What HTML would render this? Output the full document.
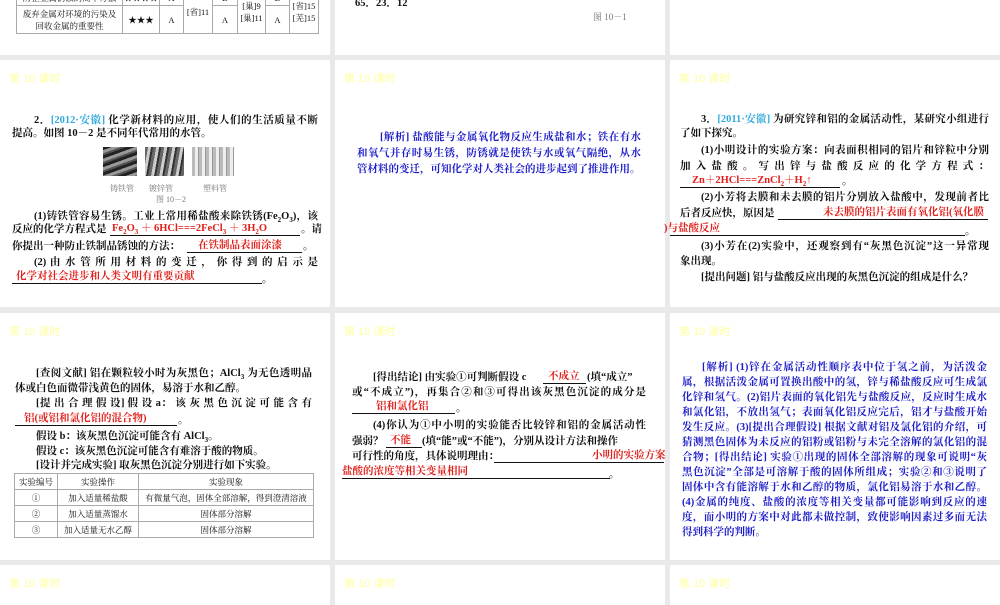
<!DOCTYPE html>
<html><head><meta charset="utf-8"><style>
*{margin:0;padding:0;box-sizing:border-box}
body{width:1000px;height:600px;background:#e9e9e9;position:relative;overflow:hidden}
.p{position:absolute;background:#fff}
.l{position:absolute;white-space:nowrap;font:bold 10.5px/14px "Liberation Serif","Noto Serif CJK SC",serif;color:#111}
.j{text-align:justify;text-align-last:justify}
.h{position:absolute;font:11px/12px "Liberation Sans","Noto Sans CJK SC",sans-serif;color:#ffffa0}
.r{color:#e0201c}
.b{color:#1c1cc8}
.c{color:#33aadd}
.ln{position:absolute;height:1px;background:#111}
table{position:absolute;border-collapse:collapse;font:8.5px "Liberation Serif","Noto Serif CJK SC",serif;color:#111;table-layout:fixed}
td{border:1px solid #aaa;text-align:center;padding:0;white-space:nowrap;overflow:hidden;line-height:12px}
.img{position:absolute;background:repeating-linear-gradient(160deg,#222 0 3px,#999 3px 6px,#555 6px 8px)}
.sm{position:absolute;font:8px "Liberation Serif","Noto Serif CJK SC",serif;color:#777;white-space:nowrap}
sub{font-size:7px}
</style></head><body>
<!-- row 1 -->
<div class="p" style="left:0;top:0;width:330px;height:55px"></div>
<div class="p" style="left:335px;top:0;width:330px;height:55px"></div>
<div class="p" style="left:670px;top:0;width:330px;height:55px"></div>
<table style="left:16px;top:-10px;width:302px;height:44px">
<tr style="height:15px"><td style="width:106px">防止金属锈蚀的简单方法</td><td style="width:37px">★★★★</td><td style="width:24px">A</td><td rowspan="2" style="width:29px">[省]11</td><td style="width:25px">B</td><td rowspan="2" style="width:28px">[巢]9<br>[巢]11</td><td style="width:24px">B</td><td rowspan="2" style="width:29px">[省]15<br>[芜]15</td></tr>
<tr><td>废弃金属对环境的污染及<br>回收金属的重要性</td><td>★★★</td><td>A</td><td>A</td><td>A</td></tr>
</table>
<div class="l" style="left:355px;top:-3px">65．23．12</div>
<div class="sm" style="left:593px;top:10px;font-size:9px">图 10－1</div>

<!-- row 2 -->
<div class="p" style="left:0;top:60px;width:330px;height:247px"></div>
<div class="p" style="left:335px;top:60px;width:330px;height:247px"></div>
<div class="p" style="left:670px;top:60px;width:330px;height:247px"></div>
<div class="h" style="left:9px;top:73px">第 10 课时</div>
<div class="h" style="left:344px;top:73px">第 10 课时</div>
<div class="h" style="left:679px;top:73px">第 10 课时</div>

<div class="l j" style="left:34px;top:114px;width:284px">2．<span class="c">[2012·安徽]</span> 化学新材料的应用，使人们的生活质量不断</div>
<div class="l" style="left:12px;top:127px">提高。如图 10－2 是不同年代常用的水管。</div>
<div class="img" style="left:103px;top:147px;width:34px;height:29px"></div>
<div class="img" style="left:145px;top:147px;width:39px;height:29px;background:repeating-linear-gradient(100deg,#666 0 3px,#ccc 3px 6px,#333 6px 8px)"></div>
<div class="img" style="left:192px;top:147px;width:42px;height:29px;background:repeating-linear-gradient(90deg,#bbb 0 3px,#eee 3px 6px,#999 6px 7px)"></div>
<div class="sm" style="left:110px;top:183px">铸铁管</div>
<div class="sm" style="left:149px;top:183px">镀锌管</div>
<div class="sm" style="left:203px;top:183px">塑料管</div>
<div class="sm" style="left:156px;top:194px">图 10－2</div>
<div class="l j" style="left:34px;top:210px;width:284px">(1)铸铁管容易生锈。工业上常用稀盐酸来除铁锈(Fe<sub>2</sub>O<sub>3</sub>)，该</div>
<div class="l" style="left:12px;top:223px">反应的化学方程式是</div>
<div class="ln" style="left:110px;top:235px;width:190px"></div>
<div class="l r" style="left:112px;top:222px">Fe<sub>2</sub>O<sub>3</sub> ＋ 6HCl===2FeCl<sub>3</sub> ＋ 3H<sub>2</sub>O</div>
<div class="l" style="left:301px;top:223px">。请</div>
<div class="l" style="left:12px;top:240px">你提出一种防止铁制品锈蚀的方法：</div>
<div class="ln" style="left:187px;top:252px;width:115px"></div>
<div class="l r" style="left:198px;top:239px">在铁制品表面涂漆</div>
<div class="l" style="left:303px;top:240px">。</div>
<div class="l j" style="left:34px;top:256px;width:284px">(2) 由 水 管 所 用 材 料 的 变 迁 ， 你 得 到 的 启 示 是</div>
<div class="ln" style="left:12px;top:283px;width:250px"></div>
<div class="l r" style="left:16px;top:270px">化学对社会进步和人类文明有重要贡献</div>
<div class="l" style="left:262px;top:273px">。</div>

<div class="l b j" style="left:380px;top:131px;width:261px">[解析] 盐酸能与金属氧化物反应生成盐和水；铁在有水</div>
<div class="l b j" style="left:357px;top:147px;width:284px">和氧气并存时易生锈，防锈就是使铁与水或氧气隔绝，从水</div>
<div class="l b" style="left:357px;top:163px">管材料的变迁，可知化学对人类社会的进步起到了推进作用。</div>

<div class="l j" style="left:701px;top:113px;width:288px">3．<span class="c">[2011·安徽]</span> 为研究锌和铝的金属活动性，某研究小组进行</div>
<div class="l" style="left:680px;top:127px">了如下探究。</div>
<div class="l j" style="left:701px;top:144px;width:288px">(1)小明设计的实验方案：向表面积相同的铝片和锌粒中分别</div>
<div class="l j" style="left:680px;top:160px;width:309px">加 入 盐 酸 。 写 出 锌 与 盐 酸 反 应 的 化 学 方 程 式 ：</div>
<div class="ln" style="left:680px;top:187px;width:160px"></div>
<div class="l r" style="left:692px;top:174px">Zn＋2HCl===ZnCl<sub>2</sub>＋H<sub>2</sub>↑</div>
<div class="l" style="left:842px;top:175px">。</div>
<div class="l j" style="left:701px;top:191px;width:288px">(2)小芳将去膜和未去膜的铝片分别放入盐酸中，发现前者比</div>
<div class="l" style="left:680px;top:207px">后者反应快，原因是</div>
<div class="ln" style="left:778px;top:219px;width:210px"></div>
<div class="l r" style="left:823px;top:206px">未去膜的铝片表面有氧化铝(氧化膜</div>
<div class="ln" style="left:670px;top:235px;width:295px"></div>
<div class="l r" style="left:664px;top:222px">)与盐酸反应</div>
<div class="l" style="left:965px;top:225px">。</div>
<div class="l j" style="left:701px;top:240px;width:288px">(3)小芳在(2)实验中，还观察到有“灰黑色沉淀”这一异常现</div>
<div class="l" style="left:680px;top:255px">象出现。</div>
<div class="l" style="left:701px;top:271px">[提出问题] 铝与盐酸反应出现的灰黑色沉淀的组成是什么？</div>

<!-- row 3 -->
<div class="p" style="left:0;top:313px;width:330px;height:247px"></div>
<div class="p" style="left:335px;top:313px;width:330px;height:247px"></div>
<div class="p" style="left:670px;top:313px;width:330px;height:247px"></div>
<div class="h" style="left:9px;top:326px">第 10 课时</div>
<div class="h" style="left:344px;top:326px">第 10 课时</div>
<div class="h" style="left:679px;top:326px">第 10 课时</div>

<div class="l j" style="left:36px;top:367px;width:276px">[查阅文献] 铝在颗粒较小时为灰黑色；AlCl<sub>3</sub> 为无色透明晶</div>
<div class="l" style="left:15px;top:382px">体或白色而微带浅黄色的固体，易溶于水和乙醇。</div>
<div class="l j" style="left:36px;top:397px;width:276px">[提 出 合 理 假 设] 假 设 a： 该 灰 黑 色 沉 淀 可 能 含 有</div>
<div class="ln" style="left:15px;top:425px;width:162px"></div>
<div class="l r" style="left:24px;top:412px">铝(或铝和氯化铝的混合物)</div>
<div class="l" style="left:178px;top:414px">。</div>
<div class="l" style="left:36px;top:430px">假设 b：该灰黑色沉淀可能含有 AlCl<sub>3</sub>。</div>
<div class="l" style="left:36px;top:445px">假设 c：该灰黑色沉淀可能含有难溶于酸的物质。</div>
<div class="l" style="left:36px;top:459px">[设计并完成实验] 取灰黑色沉淀分别进行如下实验。</div>
<table style="left:14px;top:473px;width:300px;height:65px">
<tr><td style="width:43px">实验编号</td><td style="width:81px">实验操作</td><td>实验现象</td></tr>
<tr><td>①</td><td>加入适量稀盐酸</td><td>有微量气泡，固体全部溶解，得到澄清溶液</td></tr>
<tr><td>②</td><td>加入适量蒸馏水</td><td>固体部分溶解</td></tr>
<tr><td>③</td><td>加入适量无水乙醇</td><td>固体部分溶解</td></tr>
</table>

<div class="l" style="left:373px;top:371px">[得出结论] 由实验①可判断假设 c</div>
<div class="ln" style="left:543px;top:383px;width:43px"></div>
<div class="l r" style="left:548px;top:370px">不成立</div>
<div class="l" style="left:587px;top:371px">(填“成立”</div>
<div class="l j" style="left:352px;top:386px;width:294px">或“不成立”)，再集合②和③可得出该灰黑色沉淀的成分是</div>
<div class="ln" style="left:352px;top:413px;width:103px"></div>
<div class="l r" style="left:376px;top:400px">铝和氯化铝</div>
<div class="l" style="left:456px;top:402px">。</div>
<div class="l j" style="left:373px;top:419px;width:273px">(4)你认为①中小明的实验能否比较锌和铝的金属活动性</div>
<div class="l" style="left:352px;top:435px">强弱？</div>
<div class="ln" style="left:386px;top:447px;width:36px"></div>
<div class="l r" style="left:390px;top:434px">不能</div>
<div class="l" style="left:422px;top:435px">(填“能”或“不能”)，分别从设计方法和操作</div>
<div class="l" style="left:352px;top:450px">可行性的角度，具体说明理由：</div>
<div class="ln" style="left:494px;top:462px;width:170px"></div>
<div class="l r" style="left:592px;top:449px">小明的实验方案</div>
<div class="ln" style="left:342px;top:478px;width:268px"></div>
<div class="l r" style="left:342px;top:465px">盐酸的浓度等相关变量相同</div>
<div class="l" style="left:609px;top:468px">。</div>

<div class="l b j" style="left:702px;top:361px;width:285px">[解析] (1)锌在金属活动性顺序表中位于氢之前，为活泼金</div>
<div class="l b j" style="left:682px;top:376px;width:305px">属，根据活泼金属可置换出酸中的氢，锌与稀盐酸反应可生成氯</div>
<div class="l b j" style="left:682px;top:391px;width:305px">化锌和氢气。(2)铝片表面的氧化铝先与盐酸反应，反应时生成水</div>
<div class="l b j" style="left:682px;top:406px;width:305px">和氯化铝，不放出氢气；表面氧化铝反应完后，铝才与盐酸开始</div>
<div class="l b j" style="left:682px;top:421px;width:305px">发生反应。(3)[提出合理假设] 根据文献对铝及氯化铝的介绍，可</div>
<div class="l b j" style="left:682px;top:436px;width:305px">猜测黑色固体为未反应的铝粉或铝粉与未完全溶解的氯化铝的混</div>
<div class="l b j" style="left:682px;top:451px;width:305px">合物；[得出结论] 实验①出现的固体全部溶解的现象可说明“灰</div>
<div class="l b j" style="left:682px;top:466px;width:305px">黑色沉淀”全部是可溶解于酸的固体所组成；实验②和③说明了</div>
<div class="l b j" style="left:682px;top:481px;width:305px">固体中含有能溶解于水和乙醇的物质，氯化铝易溶于水和乙醇。</div>
<div class="l b j" style="left:682px;top:496px;width:305px">(4)金属的纯度、盐酸的浓度等相关变量都可能影响到反应的速</div>
<div class="l b j" style="left:682px;top:511px;width:305px">度，而小明的方案中对此都未做控制，致使影响因素过多而无法</div>
<div class="l b" style="left:682px;top:526px">得到科学的判断。</div>

<!-- row 4 -->
<div class="p" style="left:0;top:565px;width:330px;height:40px"></div>
<div class="p" style="left:335px;top:565px;width:330px;height:40px"></div>
<div class="p" style="left:670px;top:565px;width:330px;height:40px"></div>
<div class="h" style="left:9px;top:578px">第 10 课时</div>
<div class="h" style="left:344px;top:578px">第 10 课时</div>
<div class="h" style="left:679px;top:578px">第 10 课时</div>
</body></html>
